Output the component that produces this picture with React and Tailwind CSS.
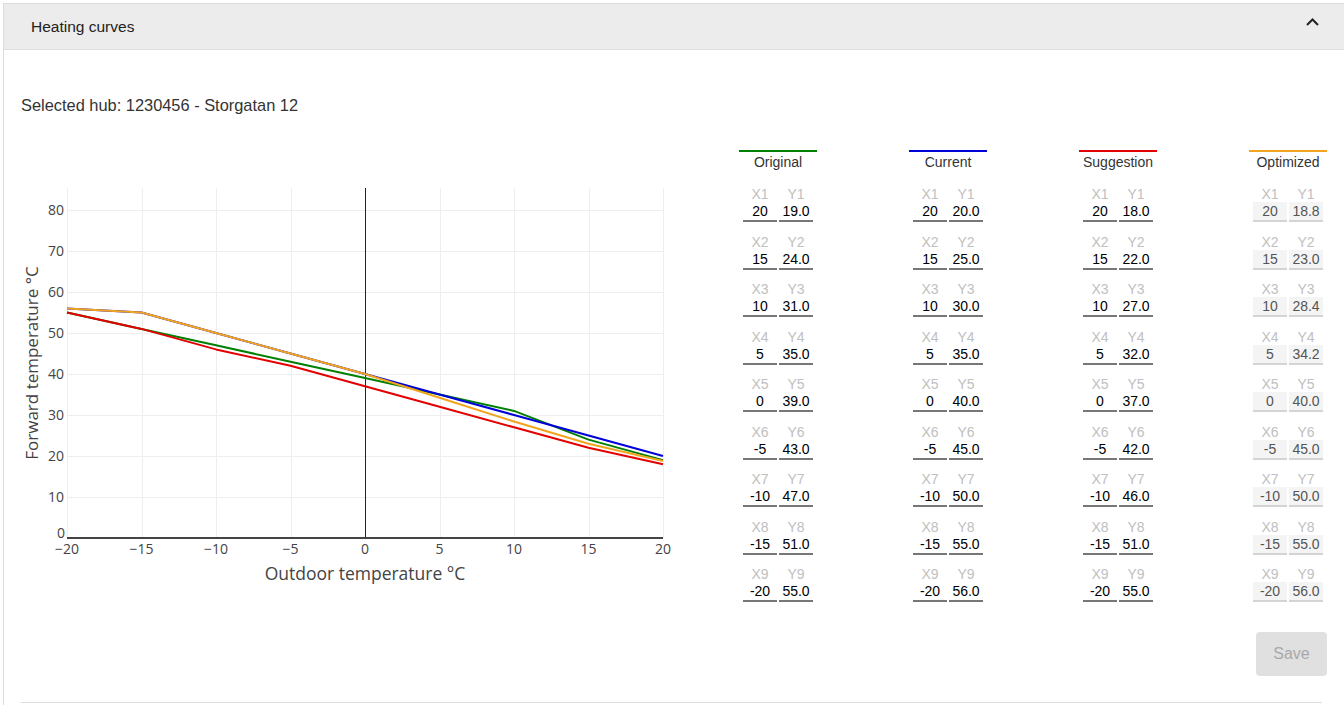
import React from "react";

const series = [
  { name: "Original", color: "#008000", xs: [20, 15, 10, 5, 0, -5, -10, -15, -20], ys: ["19.0", "24.0", "31.0", "35.0", "39.0", "43.0", "47.0", "51.0", "55.0"] },
  { name: "Current", color: "#0000d8", xs: [20, 15, 10, 5, 0, -5, -10, -15, -20], ys: ["20.0", "25.0", "30.0", "35.0", "40.0", "45.0", "50.0", "55.0", "56.0"] },
  { name: "Suggestion", color: "#e30000", xs: [20, 15, 10, 5, 0, -5, -10, -15, -20], ys: ["18.0", "22.0", "27.0", "32.0", "37.0", "42.0", "46.0", "51.0", "55.0"] },
  { name: "Optimized", color: "#f2a41f", xs: [20, 15, 10, 5, 0, -5, -10, -15, -20], ys: ["18.8", "23.0", "28.4", "34.2", "40.0", "45.0", "50.0", "55.0", "56.0"], disabled: true },
];

// plot geometry (svg coords)
const X0 = 46;
const X1 = 642;
const Y0 = 388;
const TOP = 38;
const px = (x) => X0 + ((x + 20) / 40) * (X1 - X0);
const py = (y) => Y0 - y * 4.1;

function Chart() {
  const xTicks = [-20, -15, -10, -5, 0, 5, 10, 15, 20];
  const yTicks = [0, 10, 20, 30, 40, 50, 60, 70, 80];
  const fmt = (v) => (v < 0 ? `\u2212${Math.abs(v)}` : `${v}`);

  return (
    <svg width="700" height="460" className="shrink-0" style={{ fontFamily: "'Open Sans', sans-serif" }}>
      {xTicks.filter((x) => x !== 0).map((x) => (
        <line key={"gx" + x} x1={Math.round(px(x)) + 0.5} x2={Math.round(px(x)) + 0.5} y1={TOP} y2={Y0} stroke="#eeeeee" strokeWidth="1" />
      ))}
      {yTicks.filter((y) => y !== 0).map((y) => (
        <line key={"gy" + y} x1={X0} x2={X1} y1={Math.round(py(y)) + 0.5} y2={Math.round(py(y)) + 0.5} stroke="#eeeeee" strokeWidth="1" />
      ))}
      <line x1={px(0) + 0.5} x2={px(0) + 0.5} y1={TOP} y2={Y0} stroke="#222" strokeWidth="1" />

      {series.map((s) => (
        <polyline
          key={s.name}
          points={s.xs.map((x, i) => `${px(x)},${py(parseFloat(s.ys[i]))}`).join(" ")}
          fill="none"
          stroke={s.color}
          strokeWidth="2"
          strokeLinejoin="round"
        />
      ))}

      <line x1={X0} x2={X1} y1={Y0} y2={Y0} stroke="#444" strokeWidth="2" />

      {yTicks.map((y) => (
        <text key={"ty" + y} x={y === 0 ? X0 - 2 : X0 - 3} y={y === 0 ? py(y) - 0.5 : py(y) + 5} textAnchor="end" fontSize="14" fill="#444">
          {y}
        </text>
      ))}
      {xTicks.map((x) => (
        <text key={"tx" + x} x={px(x)} y={404} textAnchor="middle" fontSize="14" fill="#444">
          {fmt(x)}
        </text>
      ))}

      <text x={(X0 + X1) / 2} y={430} textAnchor="middle" fontSize="17.5" fill="#444">
        Outdoor temperature °C
      </text>
      <text
        x={12}
        y={(TOP + Y0) / 2}
        textAnchor="middle"
        fontSize="17"
        fill="#444"
        transform={`rotate(-90 12 ${(TOP + Y0) / 2})`}
        dominantBaseline="middle"
      >
        Forward temperature °C
      </text>
    </svg>
  );
}

function CurveColumn({ s }) {
  const inputCls = s.disabled
    ? "w-[34px] h-[20px] leading-[18px] text-center text-[14px] text-[#555] bg-[#f4f4f4] border-b-2 border-[#d4d4d4]"
    : "w-[34px] h-[20px] leading-[18px] text-center text-[14px] text-black border-b-2 border-[#777]";

  return (
    <div className="w-[78px]">
      <div className="h-[2px]" style={{ backgroundColor: s.color }} />
      <div className="h-[20px] leading-[20px] text-center text-[14px] text-[#333]">{s.name}</div>
      <div className="mt-[12px]">
        {s.xs.map((x, i) => (
          <div key={i} className="h-[47.5px]">
            <div className="flex justify-center gap-[2px] h-[18px] leading-[20px] text-[14px] text-[#c0c0c0]">
              <span className="w-[34px] text-center">X{i + 1}</span>
              <span className="w-[34px] text-center">Y{i + 1}</span>
            </div>
            <div className="flex justify-center gap-[2px]">
              <div className={inputCls}>{x}</div>
              <div className={inputCls}>{s.ys[i]}</div>
            </div>
          </div>
        ))}
      </div>
    </div>
  );
}

export default function App() {
  return (
    <div className="relative w-[1344px] h-[705px] overflow-hidden bg-white pl-[3px] pt-[3px]" style={{ fontFamily: "'Liberation Sans', Arial, sans-serif" }}>
      <div className="w-[1360px] h-[720px] border-l border-t border-[#dcdcdc]">
        <div className="h-[46px] bg-[#ececec] border-b border-[#dedede] flex items-center pl-[27px]">
          <span className="text-[15.5px] text-[#222]">Heating curves</span>
        </div>
        <div className="absolute top-[17px] left-[1305px]">
          <svg width="15" height="10" viewBox="0 0 15 10">
            <path d="M2 8 L7.5 2.5 L13 8" fill="none" stroke="#222" strokeWidth="2" />
          </svg>
        </div>

        <div className="pl-[17px] pt-[45px]">
          <div className="h-[20px] leading-[20px] text-[16.4px] text-[#333]">Selected hub: 1230456 - Storgatan 12</div>

          <div className="flex mt-[35px]">
            <Chart />
            <div className="ml-[18px] w-[588px]">
              <div className="flex gap-[92px]">
                {series.map((s) => (
                  <CurveColumn key={s.name} s={s} />
                ))}
              </div>
              <div className="flex justify-end mt-[20px]">
                <button className="w-[71px] h-[44px] rounded-[4px] bg-[#e0e0e0] text-[16px] text-[#a8a8a8]">Save</button>
              </div>
            </div>
          </div>

          <div className="mt-[26px] w-[1301px] h-px bg-[#dddddd]" />
        </div>
      </div>
    </div>
  );
}
